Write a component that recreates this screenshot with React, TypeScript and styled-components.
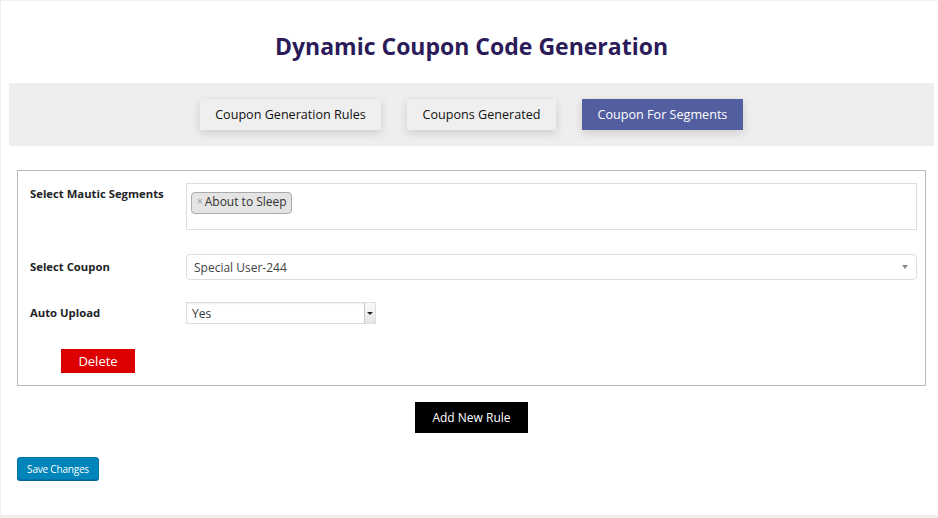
import React from 'react';
import styled, { createGlobalStyle } from 'styled-components';

const GlobalStyle = createGlobalStyle`
  html, body {
    margin: 0;
    padding: 0;
    background: #f0f0f1;
    overflow: hidden;
  }
  body {
    font-family: "Open Sans", "Noto Sans", sans-serif;
    color: #23282d;
  }
`;

const Panel = styled.div`
  box-sizing: border-box;
  width: 941px;
  height: 514px;
  margin: 1px 0 0 1px;
  background: #fff;
  padding: 0 8px;
`;

const Title = styled.h1`
  margin: 0;
  padding-top: 30px;
  height: 30px;
  line-height: 30px;
  text-align: center;
  font-family: "Open Sans", sans-serif;
  font-size: 23px;
  font-weight: 700;
  color: #2c1b59;
  margin-bottom: 22px;
`;

const TabBar = styled.nav`
  display: flex;
  justify-content: center;
  gap: 26px;
  height: 63px;
  box-sizing: border-box;
  padding-top: 16px;
  background: #eeeeee;
`;

const Tab = styled.button<{ $active?: boolean; $w: number }>`
  width: ${p => p.$w}px;
  height: 31px;
  border: none;
  padding: 0;
  font-family: "Open Sans", sans-serif;
  font-size: 12.6px;
  cursor: pointer;
  background: ${p => (p.$active ? '#525e9f' : '#efefef')};
  color: ${p => (p.$active ? '#ffffff' : '#111111')};
  box-shadow: 0 3px 9px rgba(0, 0, 0, 0.14);
`;

const Body = styled.div`
  padding: 0 8px;
`;

const RuleBox = styled.div`
  margin-top: 24px;
  border: 1px solid #bbbbbb;
  padding: 12px 8px 12px 12px;
  display: grid;
  grid-template-columns: 156px 1fr;
`;

const Label = styled.div<{ $top?: boolean; $mt?: number }>`
  font-family: "Open Sans", sans-serif;
  font-size: 11.3px;
  font-weight: 700;
  color: #1d2327;
  display: flex;
  align-items: ${p => (p.$top ? 'flex-start' : 'center')};
  padding-top: ${p => (p.$top ? '3px' : '0')};
  padding-bottom: ${p => (p.$top ? '0' : '2px')};
  margin-top: ${p => p.$mt || 0}px;
`;

const Field = styled.div<{ $mt?: number }>`
  margin-top: ${p => p.$mt || 0}px;
`;

const TagInput = styled.div`
  box-sizing: border-box;
  height: 47px;
  border: 1px solid #dddddd;
  padding: 4px;
`;

const Tag = styled.span`
  display: inline-flex;
  align-items: center;
  height: 22px;
  box-sizing: border-box;
  padding: 0 4px 4px 5px;
  background: #e4e4e4;
  border: 1px solid #aaaaaa;
  border-radius: 4px;
  font-size: 12px;
  color: #333;
`;

const TagRemove = styled.span`
  color: #999;
  font-size: 10px;
  margin-right: 2px;
`;

const ChoiceSelect = styled.div`
  box-sizing: border-box;
  height: 26px;
  border: 1px solid #dddddd;
  border-radius: 4px;
  display: flex;
  align-items: center;
  justify-content: space-between;
  padding: 0 8px 0 7px;
  font-size: 12px;
  color: #444;
`;

const Caret = styled.span`
  width: 0;
  height: 0;
  border-left: 3px solid transparent;
  border-right: 3px solid transparent;
  border-top: 4px solid #888;
`;

const NativeSelect = styled.div`
  box-sizing: border-box;
  width: 190px;
  height: 22px;
  border: 1px solid #dddddd;
  box-shadow: inset 0 1px 2px rgba(0, 0, 0, 0.07);
  display: flex;
  align-items: center;
  justify-content: space-between;
  padding-left: 5px;
  font-size: 12px;
  color: #32373c;
`;

const SelectArrow = styled.span`
  width: 11px;
  height: 20px;
  box-sizing: border-box;
  border-left: 1px solid #c8c8c8;
  background: linear-gradient(#fafafa, #e6e6e6);
  display: flex;
  align-items: center;
  justify-content: center;
  &::after {
    content: '';
    border-left: 3px solid transparent;
    border-right: 3px solid transparent;
    border-top: 3px solid #222;
  }
`;

const DeleteButton = styled.button`
  grid-column: 1 / 3;
  justify-self: start;
  margin: 25px 0 0 31px;
  width: 74px;
  height: 24px;
  border: none;
  background: #dd0000;
  color: #fff;
  font-family: "Open Sans", sans-serif;
  font-size: 13px;
  padding: 0;
  cursor: pointer;
`;

const AddRow = styled.div`
  display: flex;
  justify-content: center;
  margin-top: 16px;
`;

const AddButton = styled.button`
  width: 113px;
  height: 31px;
  border: none;
  background: #000;
  color: #fff;
  font-family: "Open Sans", sans-serif;
  font-size: 12px;
  padding: 0;
  cursor: pointer;
`;

const SaveButton = styled.button`
  margin-top: 24px;
  width: 82px;
  height: 23px;
  border: 1px solid #0073aa;
  border-radius: 3px;
  background: #0085ba;
  box-shadow: 0 1px 0 #006799;
  color: #fff;
  font-family: "Open Sans", sans-serif;
  font-size: 10px;
  letter-spacing: -0.2px;
  padding: 0;
  cursor: pointer;
`;

export default function App() {
  return (
    <>
      <GlobalStyle />
      <Panel>
        <Title>Dynamic Coupon Code Generation</Title>
        <TabBar>
          <Tab $w={181}>Coupon Generation Rules</Tab>
          <Tab $w={149}>Coupons Generated</Tab>
          <Tab $w={161} $active>Coupon For Segments</Tab>
        </TabBar>
        <Body>
          <RuleBox>
            <Label $top>Select Mautic Segments</Label>
            <TagInput>
              <Tag>
                <TagRemove>×</TagRemove>About to Sleep
              </Tag>
            </TagInput>
            <Label $mt={24}>Select Coupon</Label>
            <Field $mt={24}>
              <ChoiceSelect>
                Special User-244
                <Caret />
              </ChoiceSelect>
            </Field>
            <Label $mt={22}>Auto Upload</Label>
            <Field $mt={22}>
              <NativeSelect>
                Yes
                <SelectArrow />
              </NativeSelect>
            </Field>
            <DeleteButton>Delete</DeleteButton>
          </RuleBox>
          <AddRow>
            <AddButton>Add New Rule</AddButton>
          </AddRow>
          <SaveButton>Save Changes</SaveButton>
        </Body>
      </Panel>
    </>
  );
}
